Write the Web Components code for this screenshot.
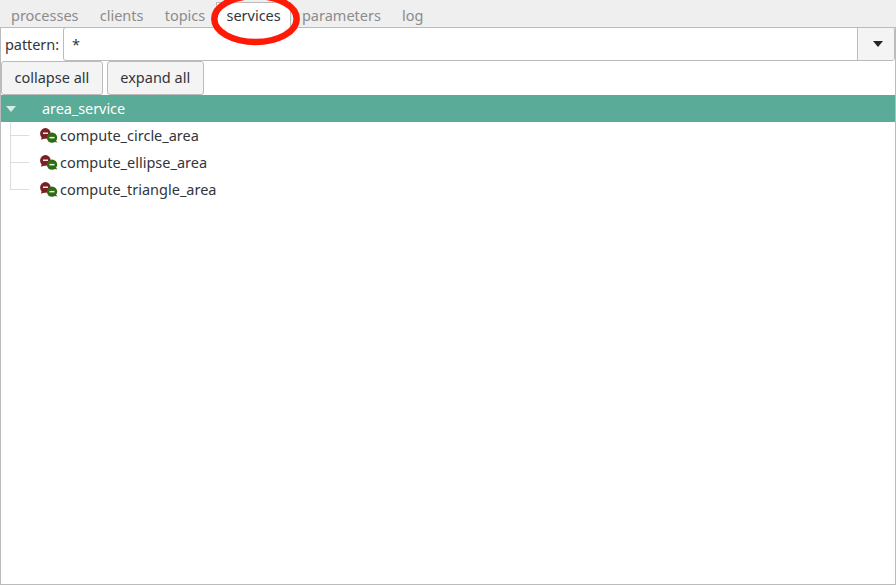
<!DOCTYPE html>
<html><head><meta charset="utf-8">
<style>
html,body{margin:0;padding:0;height:100%;background:#efefef;overflow:hidden}
body{font:14.5px "Noto Sans","Open Sans",sans-serif;color:#31363b}
</style></head><body>
<app-window>
  <tab-bar slot="tabs">
    <tab-item>processes</tab-item><tab-item>clients</tab-item><tab-item>topics</tab-item>
    <tab-item active>services</tab-item><tab-item>parameters</tab-item><tab-item>log</tab-item>
  </tab-bar>
  <pattern-row></pattern-row>
  <button-row><push-button>collapse all</push-button><push-button>expand all</push-button></button-row>
  <service-tree>
    <tree-header>area_service</tree-header>
    <tree-leaf>compute_circle_area</tree-leaf>
    <tree-leaf>compute_ellipse_area</tree-leaf>
    <tree-leaf last>compute_triangle_area</tree-leaf>
  </service-tree>
</app-window>
<script>
function def(name,html){
  customElements.define(name,class extends HTMLElement{
    constructor(){super();this.attachShadow({mode:'open'}).innerHTML=html;}
  });
}
def('app-window',`<style>
:host{display:flex;flex-direction:column;height:585px;width:896px;position:relative;box-sizing:border-box}
.pane{flex:1;display:flex;flex-direction:column;background:#fff;border:1px solid #bbb;min-height:0}
svg{position:absolute;left:205px;top:0;pointer-events:none;z-index:5}
</style><slot name="tabs"></slot><div class="pane"><slot></slot></div>
<svg width="105" height="50" viewBox="0 0 105 50"><ellipse cx="50.500" cy="19" rx="41.200" ry="23" fill="none" stroke="#fe1a06" stroke-width="6.500"/></svg>`);
def('tab-bar',`<style>:host{display:flex;height:27px;padding-left:.4px;box-sizing:border-box;align-items:flex-end;flex:none}</style><slot></slot>`);
customElements.define('tab-item',class extends HTMLElement{
  constructor(){super();this.attachShadow({mode:'open'}).innerHTML=`<style>
  :host{display:block;height:27px;box-sizing:border-box;padding:5px 10.6px 0;line-height:21px;color:#8c8c8c}
  :host([active]){color:#31363b;background:#fff;border:1px solid #bbb;border-bottom:0;height:26px;margin-bottom:-1px;padding:2px 9.6px 0;position:relative;z-index:1}
  </style><slot></slot>`;}
});
def('pattern-row',`<style>
:host{display:flex;height:33px;align-items:stretch;flex:none}
.l{width:62px;box-sizing:border-box;padding:0 0 0 4px;line-height:33px;color:#31363b;letter-spacing:-.005em}
.c{flex:1;display:flex;border:1px solid #bbb;border-radius:3px;background:#fff;margin-top:-1px;overflow:hidden}
.t{flex:1;padding-left:8px;line-height:33px}
.b{width:37px;border-left:1px solid #bbb;background:#f4f4f4;display:flex;align-items:center;justify-content:center;padding-left:3px;box-sizing:border-box}
</style><span class="l">pattern:</span><div class="c"><span class="t">*</span><div class="b"><svg width="10" height="6" viewBox="0 0 10 6"><path d="M0 0h10L5 6z" fill="#232629"/></svg></div></div>`);
def('button-row',`<style>:host{display:flex;gap:4px;height:34px;flex:none}</style><slot></slot>`);
def('push-button',`<style>:host{display:block;height:34px;box-sizing:border-box;padding:0 12.500px;border:1px solid #bbb;border-radius:3px;background:#f4f4f4;line-height:30px;color:#31363b}</style><slot></slot>`);
def('service-tree',`<style>:host{display:block;flex:1}</style><slot></slot>`);
def('tree-header',`<style>:host{display:flex;height:27px;background:#5aab97;color:#fff;align-items:center;padding-left:5px;flex:none}
span{margin-left:26px;line-height:27px;letter-spacing:-.005em}</style><svg width="10" height="6" viewBox="0 0 10 6"><path d="M0 0h10L5 6z" fill="#d6ece6"/></svg><span><slot></slot></span>`);
customElements.define('tree-leaf',class extends HTMLElement{
  constructor(){super();this.attachShadow({mode:'open'}).innerHTML=`<style>
  :host{display:flex;height:27px;align-items:center;position:relative;padding-left:39px}
  .v{position:absolute;left:9px;top:0;width:1px;height:100%;background:#ddd}
  :host([last]) .v{height:14px}
  .h{position:absolute;left:9px;top:13px;width:19px;height:1px;background:#ddd}
  svg{flex:none;margin-right:2px}
  span{line-height:27px}
  </style><div class="v"></div><div class="h"></div>
  <svg width="18" height="15" viewBox="0 0 18 15">
    <circle cx="5.400" cy="5.400" r="5.300" fill="#7a1f22"/><path d="M2 8l-1 3.800 4.200-1.500z" fill="#7a1f22"/>
    <rect x="3" y="4.500" width="5" height="1.500" fill="#f6e9e9"/>
    <circle cx="12" cy="9.600" r="5.200" fill="#2f6b14"/><path d="M15.500 12l2 2.500-4-.8z" fill="#2f6b14"/>
    <rect x="9.500" y="8.900" width="5" height="1.500" fill="#eaf3e4"/>
  </svg><span><slot></slot></span>`;}
});
</script>
</body></html>
